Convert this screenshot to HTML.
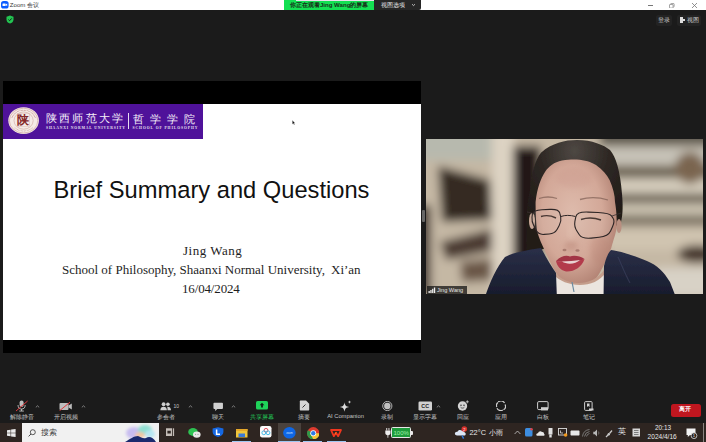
<!DOCTYPE html>
<html><head><meta charset="utf-8">
<style>
*{margin:0;padding:0;box-sizing:border-box}
html,body{width:706px;height:442px;overflow:hidden;background:#1b1b1b;font-family:"Liberation Sans",sans-serif}
.a{position:absolute}
#title{left:0;top:0;width:706px;height:10px;background:#fff}
#slide{left:3px;top:81px;width:418px;height:272px;background:#000}
#sw{left:3px;top:104px;width:418px;height:236px;background:#fff}
#banner{left:3px;top:104px;width:200px;height:35px;background:#4f129a}
#video{left:426px;top:139px;width:277px;height:155px;background:#b9a98f;overflow:hidden}
#taskbar{left:0;top:423px;width:706px;height:19px;background:#2e2521}
#search{left:22px;top:423px;width:137px;height:19px;background:#f1f1f1}
.t{white-space:nowrap;line-height:1}
.tb{color:#c6c6c6;font-size:6.4px;white-space:nowrap;line-height:1}
</style></head><body>
<!-- title bar -->
<div class="a" id="title"></div>
<svg class="a" style="left:0.8px;top:1.2px" width="8" height="8" viewBox="0 0 8 8"><rect x="0" y="0" width="7.6" height="7.6" rx="2.6" fill="#0b5cff"/><rect x="1.5" y="2.6" width="3.2" height="2.4" rx="0.5" fill="#fff"/><path d="M4.9 3.3 L6.2 2.6 V5 L4.9 4.3 Z" fill="#fff"/></svg>
<div class="a t" style="left:9.8px;top:2.3px;font-size:6.1px;color:#3a3a3a">Zoom 会议</div>
<div class="a" style="left:284px;top:0;width:90px;height:10px;background:#14df52"></div><div class="a" style="left:296px;top:0;width:125px;height:1px;background:#e8e0ea"></div>
<div class="a t" style="left:290px;top:1.9px;font-size:6.05px;color:#173019;font-weight:bold">你正在观看Jing Wang的屏幕</div>
<div class="a" style="left:374px;top:0;width:47px;height:10px;background:#262626;border-radius:0 0 2px 0"></div>
<div class="a t" style="left:381px;top:2px;font-size:6px;color:#e8e8e8">视图选项</div>
<svg class="a" style="left:411px;top:3px" width="5" height="4" viewBox="0 0 5 4"><path d="M1 1.2 L2.5 2.6 L4 1.2" stroke="#ddd" stroke-width="0.8" fill="none"/></svg>
<div class="a" style="left:648px;top:5px;width:5px;height:1px;background:#777"></div>
<svg class="a" style="left:669.2px;top:2.8px" width="5.6" height="5.6" viewBox="0 0 7 7"><rect x="0.6" y="1.9" width="4.5" height="4.5" rx="0.6" stroke="#666" stroke-width="0.75" fill="none"/><path d="M1.9 1.2 Q2.1 0.6 2.8 0.6 H5.6 Q6.4 0.6 6.4 1.4 V4.2 Q6.4 4.9 5.8 5.1" stroke="#666" stroke-width="0.75" fill="none"/></svg>
<svg class="a" style="left:691px;top:2px" width="7" height="7" viewBox="0 0 7 7"><path d="M1 1 L6 6 M6 1 L1 6" stroke="#777" stroke-width="0.8"/></svg>
<!-- shield -->
<svg class="a" style="left:6px;top:15px" width="8" height="9" viewBox="0 0 8 9"><path d="M4 0.5 L7.5 1.8 V4.5 C7.5 6.8 5.8 8 4 8.6 C2.2 8 0.5 6.8 0.5 4.5 V1.8 Z" fill="#23c552"/><path d="M2.4 4.6 L3.6 5.7 L5.7 3.4" stroke="#111" stroke-width="0.9" fill="none"/></svg>
<!-- top right buttons -->
<div class="a" style="left:656px;top:15px;width:16px;height:11px;background:#232323;border-radius:2px"></div>
<div class="a t" style="left:658px;top:17px;font-size:6px;color:#cfcfcf">登录</div>
<div class="a" style="left:677px;top:15px;width:24px;height:11px;background:#232323;border-radius:2px"></div>
<div class="a" style="left:680px;top:17px;width:3px;height:6px;background:#ddd"></div>
<div class="a" style="left:683px;top:19px;width:2px;height:2px;background:#ddd"></div>
<div class="a t" style="left:687px;top:17px;font-size:6px;color:#cfcfcf">视图</div>

<!-- slide -->
<div class="a" id="slide"></div>
<div class="a" id="sw"></div>
<div class="a" id="banner"></div>
<svg class="a" style="left:8px;top:107px" width="32" height="28" viewBox="0 0 32 28"><ellipse cx="15.6" cy="13.6" rx="15.3" ry="13.4" fill="#f4eae6"/><ellipse cx="15.6" cy="13.6" rx="14.2" ry="12.4" fill="none" stroke="#c48d86" stroke-width="0.5"/><ellipse cx="15.6" cy="13.6" rx="9.6" ry="8.6" fill="none" stroke="#c99a93" stroke-width="0.5"/><circle cx="4.00" cy="10.39" r="0.45" fill="#b06a66"/><circle cx="4.53" cy="9.23" r="0.45" fill="#b06a66"/><circle cx="5.22" cy="8.13" r="0.45" fill="#b06a66"/><circle cx="6.06" cy="7.12" r="0.45" fill="#b06a66"/><circle cx="7.04" cy="6.19" r="0.45" fill="#b06a66"/><circle cx="8.14" cy="5.37" r="0.45" fill="#b06a66"/><circle cx="9.34" cy="4.67" r="0.45" fill="#b06a66"/><circle cx="10.64" cy="4.10" r="0.45" fill="#b06a66"/><circle cx="12.00" cy="3.66" r="0.45" fill="#b06a66"/><circle cx="13.42" cy="3.37" r="0.45" fill="#b06a66"/><circle cx="14.87" cy="3.22" r="0.45" fill="#b06a66"/><circle cx="16.33" cy="3.22" r="0.45" fill="#b06a66"/><circle cx="17.78" cy="3.37" r="0.45" fill="#b06a66"/><circle cx="19.20" cy="3.66" r="0.45" fill="#b06a66"/><circle cx="20.56" cy="4.10" r="0.45" fill="#b06a66"/><circle cx="21.86" cy="4.67" r="0.45" fill="#b06a66"/><circle cx="23.06" cy="5.37" r="0.45" fill="#b06a66"/><circle cx="24.16" cy="6.19" r="0.45" fill="#b06a66"/><circle cx="25.14" cy="7.12" r="0.45" fill="#b06a66"/><circle cx="25.98" cy="8.13" r="0.45" fill="#b06a66"/><circle cx="26.67" cy="9.23" r="0.45" fill="#b06a66"/><circle cx="27.20" cy="10.39" r="0.45" fill="#b06a66"/><circle cx="24.23" cy="20.95" r="0.4" fill="#b88078"/><circle cx="23.12" cy="21.79" r="0.4" fill="#b88078"/><circle cx="21.91" cy="22.50" r="0.4" fill="#b88078"/><circle cx="20.61" cy="23.08" r="0.4" fill="#b88078"/><circle cx="19.23" cy="23.53" r="0.4" fill="#b88078"/><circle cx="17.80" cy="23.83" r="0.4" fill="#b88078"/><circle cx="16.34" cy="23.98" r="0.4" fill="#b88078"/><circle cx="14.86" cy="23.98" r="0.4" fill="#b88078"/><circle cx="13.40" cy="23.83" r="0.4" fill="#b88078"/><circle cx="11.97" cy="23.53" r="0.4" fill="#b88078"/><circle cx="10.59" cy="23.08" r="0.4" fill="#b88078"/><circle cx="9.29" cy="22.50" r="0.4" fill="#b88078"/><circle cx="8.08" cy="21.79" r="0.4" fill="#b88078"/><circle cx="6.97" cy="20.95" r="0.4" fill="#b88078"/><rect x="9.6" y="6.6" width="12" height="13" fill="none" stroke="#d9b0aa" stroke-width="0.4"/></svg>
<div class="a t" style="left:17.2px;top:114px;font-family:'Liberation Serif';font-size:12.4px;color:#86282a;font-weight:bold">陕</div>
<div class="a t" style="left:45.5px;top:113.4px;font-family:'Liberation Serif';font-size:11.4px;color:#f4eef8;letter-spacing:2.4px">陕西师范大学</div>
<div class="a t" style="left:46px;top:126.9px;font-family:'Liberation Serif';font-size:3.7px;color:#e8e0ef;letter-spacing:0.85px;font-weight:bold">SHAANXI NORMAL UNIVERSITY</div>
<div class="a" style="left:128px;top:112.5px;width:1px;height:16px;background:#e6dcef"></div>
<div class="a t" style="left:132.5px;top:113.8px;font-family:'Liberation Serif';font-size:11px;color:#f4eef8;letter-spacing:6px">哲学学院</div>
<div class="a t" style="left:132.5px;top:126.9px;font-family:'Liberation Serif';font-size:3.7px;color:#e8e0ef;letter-spacing:0.95px;font-weight:bold">SCHOOL OF PHILOSOPHY</div>
<div class="a t" style="left:53.5px;top:178.5px;font-size:23.7px;color:#111">Brief Summary and Questions</div>
<div class="a t" style="left:183px;top:244.2px;font-family:'Liberation Serif';font-size:13px;color:#1e1e1e;letter-spacing:0.5px">Jing Wang</div>
<div class="a t" style="left:62px;top:263.2px;font-family:'Liberation Serif';font-size:13px;color:#1e1e1e">School of Philosophy, Shaanxi Normal University,</div>
<div class="a t" style="left:331px;top:263.2px;font-family:'Liberation Serif';font-size:13px;color:#1e1e1e">Xi’an</div>
<div class="a t" style="left:182px;top:282.2px;font-family:'Liberation Serif';font-size:13px;color:#1e1e1e;letter-spacing:-0.15px">16/04/2024</div>
<!-- cursor -->
<svg class="a" style="left:292px;top:120.3px" width="4" height="5.4" viewBox="0 0 6 8"><path d="M0.5 0.5 L0.5 6.5 L2 5.2 L3.2 7.5 L4 7.1 L2.9 4.9 L4.8 4.9 Z" fill="#111" stroke="#fff" stroke-width="0.4"/></svg>

<!-- splitter -->
<div class="a" style="left:422px;top:210px;width:3px;height:12px;background:#666;border-radius:1px"></div>

<div class="a" id="video"><svg width="277" height="155" viewBox="426 139 277 155">
<defs>
<filter id="bl" x="-20%" y="-20%" width="140%" height="140%"><feGaussianBlur stdDeviation="5"/></filter>
<filter id="bl1" x="-20%" y="-20%" width="140%" height="140%"><feGaussianBlur stdDeviation="0.7"/></filter>
<filter id="bl3" x="-50%" y="-50%" width="200%" height="200%"><feGaussianBlur stdDeviation="2.5"/></filter>
<radialGradient id="skin" cx="0.45" cy="0.42" r="0.62"><stop offset="0" stop-color="#debbac"/><stop offset="0.6" stop-color="#d3a898"/><stop offset="1" stop-color="#ad7d6e"/></radialGradient>
<radialGradient id="hairg" cx="0.5" cy="0.1" r="0.7"><stop offset="0" stop-color="#4e4843"/><stop offset="0.5" stop-color="#2e2824"/><stop offset="1" stop-color="#221c19"/></radialGradient>
<linearGradient id="suitg" x1="0" y1="0" x2="0" y2="1"><stop offset="0" stop-color="#2a2f48"/><stop offset="1" stop-color="#161a2a"/></linearGradient>
</defs>
<g filter="url(#bl)">
<rect x="400" y="120" width="330" height="200" fill="#c5b8a4"/>
<rect x="420" y="120" width="85" height="40" fill="#b7b9ae"/>
<rect x="418" y="205" width="13" height="90" fill="#3f332b"/>
<path d="M438 166 L490 180 L492 220 L442 222 Z" fill="#362b24"/>
<path d="M440 242 L496 228 L498 250 L446 260 Z" fill="#4b3b30"/>
<path d="M460 262 L497 258 L498 280 L462 282 Z" fill="#6a5646"/>
<rect x="492" y="125" width="22" height="180" fill="#ddd3c3"/>
<rect x="513" y="146" width="28" height="120" fill="#211914"/>
<rect x="600" y="120" width="130" height="26" fill="#5e5a50"/>
<rect x="600" y="148" width="130" height="16" fill="#c6c2b8"/>
<rect x="600" y="166" width="130" height="12" fill="#675e50"/>
<rect x="600" y="179" width="130" height="14" fill="#d4ccbc"/>
<rect x="600" y="194" width="130" height="9" fill="#5e564a"/>
<rect x="600" y="204" width="130" height="11" fill="#cbc3b1"/>
<rect x="600" y="215" width="130" height="11" fill="#7c7262"/>
<rect x="600" y="228" width="130" height="22" fill="#d0c4b0"/>
<ellipse cx="697" cy="254" rx="20" ry="9" fill="#45362c"/>
<rect x="655" y="268" width="60" height="30" fill="#d8d2c6"/>
<ellipse cx="690" cy="168" rx="15" ry="16" fill="#7a6550"/>
</g>
<g filter="url(#bl1)">
<!-- hair -->
<path d="M527 252 C525 225 527 205 530 190 C531 175 535 160 541 152.7 C552 143 565 140 577 140 C592 140 604 145 610 150 C616 157 620 170 622 194 C623 205 623 214 621 222 L616 226 L540 250 Z" fill="url(#hairg)"/>
<!-- ears -->
<ellipse cx="532" cy="221" rx="3" ry="8" fill="#c9a897"/>
<ellipse cx="619" cy="226" rx="2.6" ry="7" fill="#b98f80"/>
<!-- face -->
<path d="M535.6 202 C537 188 541 178 545 172 C549 166 554 162.3 562 160.5 C568 159.5 572 159.3 576.7 159.5 C585 160 591 162 596 165 C603 170 607 175 609.6 180 C613 188 615 195 615 202 C616 208 616.4 212 616.6 218 C617 226 616.5 232 613.5 240 C612 245 611 250 607 258 C603 267 599 276 592 283 C586 287 580 288 574 288 C566 287 560 280 555 271 C551 264 548 258 545 251 C542 245 539 238 537 231 C536 222 535.5 212 535.6 202 Z" fill="url(#skin)"/>
<ellipse cx="574" cy="178" rx="18" ry="10" fill="#c9968a" opacity="0.3" filter="url(#bl3)"/>
<ellipse cx="600" cy="250" rx="10" ry="14" fill="#b88474" opacity="0.35" filter="url(#bl3)"/>
<!-- eyebrows -->
<path d="M539 198.5 C545 196.5 551 196.5 557 198.5" stroke="#6e5046" stroke-width="1.3" fill="none" opacity="0.6"/>
<path d="M580 199.5 C589 197 598 197 608 200" stroke="#6e5046" stroke-width="1.3" fill="none" opacity="0.6"/>
<!-- nose -->
<ellipse cx="571" cy="246" rx="7" ry="5" fill="#c08f80" opacity="0.55" filter="url(#bl3)"/>
<ellipse cx="564.5" cy="250" rx="2" ry="1.3" fill="#8e5e55" opacity="0.6"/>
<ellipse cx="577.5" cy="250.5" rx="2" ry="1.3" fill="#8e5e55" opacity="0.6"/>
<ellipse cx="571" cy="232" rx="2.5" ry="8" fill="#e3c4b4" opacity="0.5" filter="url(#bl3)"/>
<!-- lips -->
<path d="M556 261 C561 256 566 255 570 256.5 C574 255 580 256 584.5 259 C580 262 570 263 556 261 Z" fill="#a23445"/>
<path d="M556 261 C566 262 577 262 584.5 259 C582 267 574 272 566 271.5 C560 270 557 266 556 261 Z" fill="#b33a4c"/>
<path d="M562 261.5 C568 261 575 261 580 260 C576 264 567 265 562 261.5 Z" fill="#e9d3d2"/>
<!-- neck -->
<path d="M552 268 C560 285 590 290 604 270 L606 292 L552 292 Z" fill="#c49d8b"/>
<!-- shirt -->
<path d="M553 274 C565 288 595 290 606 272 L610 300 L550 300 Z" fill="#ebe5df"/>
<path d="M572 282 L574 292" stroke="#6a8aa0" stroke-width="1.2"/>
<!-- suit -->
<path d="M484 300 C489 284 496 268 505 257 C514 252 528 250 541 248 C546 257 551 266 556 273 L557 300 Z" fill="url(#suitg)"/>
<path d="M603.5 300 L604 266 C606 258 608 253 611 250 C620 251 635 256 647 261 C657 265 664 272 670 282 L677 300 Z" fill="url(#suitg)"/><path d="M618 257 C622 266 626 276 630 283" stroke="#3a3f5c" stroke-width="1.2" fill="none" opacity="0.7"/>


<!-- glasses -->
<path d="M532.4 214.0 Q532.9 210.2 542.0 209.7 L549.8 209.4 Q558.9 208.9 559.8 213.2 L560.7 216.9 Q561.6 221.2 559.2 225.5 L557.2 229.2 Q554.8 233.5 549.1 234.0 L544.1 234.4 Q538.4 234.9 536.0 230.1 L533.9 226.0 Q531.5 221.2 532.0 217.3 Z" fill="#e2d2cc" fill-opacity="0.12" stroke="#2e2626" stroke-width="1.1"/>
<path d="M575.8 216.9 Q576.7 211.6 588.2 212.1 L598.1 212.5 Q609.6 213.0 611.5 215.9 L613.1 218.3 Q615.0 221.2 612.6 226.5 L610.6 231.0 Q608.2 236.3 599.1 237.2 L591.3 238.1 Q582.2 239.0 579.3 234.7 L576.9 231.0 Q574.0 226.7 574.9 221.4 Z" fill="#e2d2cc" fill-opacity="0.12" stroke="#2e2626" stroke-width="1.1"/>
<path d="M561 216.5 C565 215 570 215 575.5 216.5" stroke="#2e2626" stroke-width="1" fill="none"/>
<path d="M532 213 L527 212" stroke="#3a3031" stroke-width="0.8" fill="none"/>
<path d="M612 216 L621 213" stroke="#3a3031" stroke-width="0.8" fill="none"/>
<!-- eyes -->
<path d="M541 216.5 C546 215 551 215.5 556 218" stroke="#2e2220" stroke-width="1.4" fill="none" opacity="0.85"/>
<path d="M581 219.5 C587 217.5 594 217.5 601 220" stroke="#2e2220" stroke-width="1.4" fill="none" opacity="0.85"/>
</g>
</svg>
<div class="a" style="left:1px;top:147px;width:40px;height:8px;background:rgba(20,20,20,0.75)"></div>
<svg class="a" style="left:2px;top:148px" width="8" height="6" viewBox="0 0 8 6"><rect x="0.5" y="4" width="1.3" height="2" fill="#eee"/><rect x="2.3" y="3" width="1.3" height="3" fill="#eee"/><rect x="4.1" y="1.8" width="1.3" height="4.2" fill="#eee"/><rect x="5.9" y="0.5" width="1.3" height="5.5" fill="#eee"/></svg>
<div class="a t" style="left:11px;top:148.5px;font-size:5.6px;color:#e4e4e4">Jing Wang</div>
</div>

<!-- zoom toolbar -->
<svg class="a" style="left:15px;top:400px" width="14" height="12" viewBox="0 0 14 12"><rect x="4.6" y="0.6" width="4" height="6.4" rx="2" fill="#bdbdbd"/><path d="M3 5 C3 8 4.6 9 6.6 9 C8.6 9 10.2 8 10.2 5" stroke="#bdbdbd" stroke-width="0.9" fill="none"/><rect x="6.1" y="9" width="1" height="2" fill="#bdbdbd"/><rect x="4.3" y="10.6" width="4.6" height="0.9" fill="#bdbdbd"/><path d="M1 11 L12.6 1" stroke="#e0393e" stroke-width="1"/></svg>
<svg class="a" style="left:35px;top:405.2px" width="5" height="3" viewBox="0 0 5 3"><path d="M0.8 2.4 L2.5 0.8 L4.2 2.4" stroke="#aaa" stroke-width="0.7" fill="none"/></svg>
<div class="a tb" style="left:-8.50px;width:60px;text-align:center;top:413.5px">解除静音</div>
<svg class="a" style="left:59px;top:402px" width="14" height="9" viewBox="0 0 14 9"><rect x="0.5" y="1" width="9" height="7" rx="1" fill="#bdbdbd"/><path d="M9.5 3.5 L12.8 1.5 V7.5 L9.5 5.5 Z" fill="#bdbdbd"/><path d="M0.5 8.8 L11 0.2" stroke="#e0393e" stroke-width="1"/></svg>
<svg class="a" style="left:81px;top:405.2px" width="5" height="3" viewBox="0 0 5 3"><path d="M0.8 2.4 L2.5 0.8 L4.2 2.4" stroke="#aaa" stroke-width="0.7" fill="none"/></svg>
<div class="a tb" style="left:36.25px;width:60px;text-align:center;top:413.5px">开启视频</div>

<svg class="a" style="left:160px;top:402px" width="11.5" height="8.6" viewBox="0 0 13 10"><circle cx="4" cy="2.6" r="2.2" fill="#cfcfcf"/><path d="M0.2 9.5 C0.2 6.5 1.8 5.4 4 5.4 C6.2 5.4 7.8 6.5 7.8 9.5 Z" fill="#cfcfcf"/><circle cx="9" cy="2.6" r="2.1" fill="#cfcfcf"/><path d="M8 5.5 C10.5 5.2 12.6 6.2 12.6 9.5 H8.6 C8.6 7.5 8.4 6.3 8 5.5 Z" fill="#cfcfcf"/></svg>
<div class="a tb" style="left:173.5px;top:403.5px;font-size:5px">10</div>
<svg class="a" style="left:188px;top:405.2px" width="5" height="3" viewBox="0 0 5 3"><path d="M0.8 2.4 L2.5 0.8 L4.2 2.4" stroke="#aaa" stroke-width="0.7" fill="none"/></svg>
<div class="a tb" style="left:136.30px;width:60px;text-align:center;top:413.5px">参会者</div>

<svg class="a" style="left:212.8px;top:401.6px" width="10.4" height="9.5" viewBox="0 0 12 11"><path d="M1.5 0.8 H10.5 C11.1 0.8 11.5 1.2 11.5 1.8 V7 C11.5 7.6 11.1 8 10.5 8 H5 L2.5 10.4 V8 H1.5 C0.9 8 0.5 7.6 0.5 7 V1.8 C0.5 1.2 0.9 0.8 1.5 0.8 Z" fill="#cfcfcf"/></svg>
<svg class="a" style="left:231px;top:405.2px" width="5" height="3" viewBox="0 0 5 3"><path d="M0.8 2.4 L2.5 0.8 L4.2 2.4" stroke="#aaa" stroke-width="0.7" fill="none"/></svg>
<div class="a tb" style="left:187.70px;width:60px;text-align:center;top:413.5px">聊天</div>

<svg class="a" style="left:256px;top:401px" width="12" height="9" viewBox="0 0 12 9"><rect x="0" y="0" width="12" height="8.5" rx="1.6" fill="#1fd35a"/><path d="M6 1.8 L8.3 4.3 H6.9 V6.6 H5.1 V4.3 H3.7 Z" fill="#0f1f14"/></svg>
<div class="a tb" style="left:231.65px;width:60px;text-align:center;top:413.5px;color:#23d35c">共享屏幕</div>

<svg class="a" style="left:299px;top:400px" width="11" height="11" viewBox="0 0 11 11"><path d="M1.8 0.5 H7 L10.2 3.7 V9.5 C10.2 10.1 9.8 10.5 9.2 10.5 H1.8 C1.2 10.5 0.8 10.1 0.8 9.5 V1.5 C0.8 0.9 1.2 0.5 1.8 0.5 Z" fill="#d4d4d4"/><path d="M3.5 7.5 L6.5 4.5" stroke="#333" stroke-width="1"/></svg>
<div class="a tb" style="left:274.15px;width:60px;text-align:center;top:413.5px">摘要</div>

<svg class="a" style="left:339px;top:400px" width="13" height="12" viewBox="0 0 13 12"><path d="M5.5 2.2 C6 5.5 7 6.5 10.2 7 C7 7.5 6 8.5 5.5 11.8 C5 8.5 4 7.5 0.8 7 C4 6.5 5 5.5 5.5 2.2 Z" fill="#dedede"/><path d="M10.5 0.3 C10.7 1.6 11 1.9 12.3 2.1 C11 2.3 10.7 2.6 10.5 3.9 C10.3 2.6 10 2.3 8.7 2.1 C10 1.9 10.3 1.6 10.5 0.3 Z" fill="#dedede"/></svg>
<div class="a tb" style="left:315.50px;width:60px;text-align:center;top:413.5px;font-size:5.8px">AI Companion</div>

<svg class="a" style="left:382px;top:401px" width="11" height="10" viewBox="0 0 11 10"><circle cx="5.3" cy="5" r="4.6" fill="none" stroke="#bfbfbf" stroke-width="0.9"/><circle cx="5.3" cy="5" r="3.2" fill="#bfbfbf"/></svg>
<div class="a tb" style="left:357.45px;width:60px;text-align:center;top:413.5px">录制</div>

<svg class="a" style="left:418px;top:401px" width="15" height="10" viewBox="0 0 15 10"><rect x="0.5" y="0.5" width="13.5" height="9" rx="1.2" fill="#d0d0d0"/><text x="7.25" y="7" font-family="Liberation Sans" font-size="5.4" font-weight="bold" text-anchor="middle" fill="#222">CC</text></svg>
<svg class="a" style="left:436px;top:405.2px" width="5" height="3" viewBox="0 0 5 3"><path d="M0.8 2.4 L2.5 0.8 L4.2 2.4" stroke="#aaa" stroke-width="0.7" fill="none"/></svg>
<div class="a tb" style="left:394.85px;width:60px;text-align:center;top:413.5px">显示字幕</div>

<svg class="a" style="left:457px;top:400px" width="12" height="11" viewBox="0 0 12 11"><circle cx="5.5" cy="6" r="4.7" fill="#d4d4d4"/><circle cx="4" cy="5.2" r="0.7" fill="#222"/><circle cx="7" cy="5.2" r="0.7" fill="#222"/><path d="M3.6 7.2 C4.5 8.4 6.5 8.4 7.4 7.2" stroke="#222" stroke-width="0.7" fill="none"/><path d="M10.3 0.3 V3.3 M8.8 1.8 H11.8" stroke="#d4d4d4" stroke-width="0.8"/></svg>
<div class="a tb" style="left:432.75px;width:60px;text-align:center;top:413.5px">回应</div>

<svg class="a" style="left:496px;top:401px" width="10" height="10" viewBox="0 0 10 10"><path d="M2.2 1 A4 4 0 0 1 8.5 2" stroke="#cfcfcf" stroke-width="1.2" fill="none"/><path d="M9 3.5 A4 4 0 0 1 7.5 8.8" stroke="#cfcfcf" stroke-width="1.2" fill="none"/><path d="M6.8 9 A4 4 0 0 1 1 7.2" stroke="#cfcfcf" stroke-width="1.2" fill="none"/><path d="M0.8 6 A4 4 0 0 1 1.8 1.5" stroke="#cfcfcf" stroke-width="1.2" fill="none"/></svg>
<div class="a tb" style="left:471.25px;width:60px;text-align:center;top:413.5px">应用</div>

<svg class="a" style="left:537px;top:401px" width="12" height="10" viewBox="0 0 12 10"><rect x="0.6" y="0.6" width="10.5" height="8" rx="1.2" fill="none" stroke="#cfcfcf" stroke-width="1"/><rect x="4" y="6.2" width="7" height="3.2" fill="#cfcfcf"/></svg>
<div class="a tb" style="left:512.90px;width:60px;text-align:center;top:413.5px">白板</div>

<svg class="a" style="left:584px;top:401px" width="10" height="10" viewBox="0 0 10 10"><rect x="0.6" y="0.6" width="7.5" height="8.8" rx="1" fill="none" stroke="#cfcfcf" stroke-width="1"/><path d="M3 2.5 H5.5 V6 L4.25 5 L3 6 Z" fill="#cfcfcf"/><rect x="5" y="7.5" width="4.5" height="2" fill="#cfcfcf"/></svg>
<div class="a tb" style="left:558.75px;width:60px;text-align:center;top:413.5px">笔记</div>

<div class="a" style="left:671px;top:404px;width:29.5px;height:13px;background:#c0161f;border-radius:2.5px"></div>
<div class="a t" style="left:655.3px;width:60px;text-align:center;top:406.4px;font-size:6.4px;color:#fff;font-weight:bold">离开</div>

<!-- taskbar -->
<div class="a" id="taskbar"></div>
<svg class="a" style="left:7px;top:428.5px" width="9" height="8" viewBox="0 0 9 8"><path d="M0 1.2 L3.6 0.7 V3.7 H0 Z M4.1 0.6 L8.6 0 V3.7 H4.1 Z M0 4.2 H3.6 V7.3 L0 6.8 Z M4.1 4.2 H8.6 V8 L4.1 7.4 Z" fill="#eaeaea"/></svg>
<div class="a" id="search"></div>
<svg class="a" style="left:28px;top:429px" width="8" height="8" viewBox="0 0 8 8"><circle cx="4.8" cy="3.2" r="2.5" fill="none" stroke="#333" stroke-width="0.8"/><path d="M3 5 L0.6 7.4" stroke="#333" stroke-width="0.9"/></svg>
<div class="a t" style="left:41.3px;top:428.6px;font-size:7.8px;color:#3a3a3a">搜索</div>
<svg class="a" style="left:122px;top:423px" width="37" height="19" viewBox="0 0 37 19">
<defs><filter id="sb"><feGaussianBlur stdDeviation="1.6"/></filter></defs>
<g filter="url(#sb)"><ellipse cx="12" cy="10" rx="8" ry="6" fill="#c8bdf0"/><ellipse cx="23" cy="7" rx="7" ry="5" fill="#8fe0d2"/><ellipse cx="18" cy="12" rx="5" ry="3" fill="#f3c6a0"/><ellipse cx="28" cy="11" rx="5" ry="4" fill="#b8e6f2"/></g>
<path d="M3 19 C8 16 12 13 16 13 C19 14 21 16 24 15 C27 13 31 14 34 19 Z" fill="#1b2a6e"/>
</svg>
<svg class="a" style="left:166px;top:428px" width="9" height="9" viewBox="0 0 9 9"><path d="M0 0.3 H6.2 V8 H0 Z M1.4 2.8 V5.6 H4.8 V2.8 Z" fill="#c4bcb6" fill-rule="evenodd"/><rect x="7" y="0.3" width="1.1" height="7.7" fill="#c4bcb6"/></svg>
<!-- wechat -->
<svg class="a" style="left:188px;top:427.5px" width="13" height="10" viewBox="0 0 13 10"><ellipse cx="5" cy="4" rx="4.8" ry="3.9" fill="#2dc152"/><ellipse cx="8.8" cy="6.6" rx="3.8" ry="3.2" fill="#e8e8e8"/><circle cx="7.6" cy="6.3" r="0.5" fill="#777"/><circle cx="10" cy="6.3" r="0.5" fill="#777"/></svg>
<!-- blue shield -->
<svg class="a" style="left:212px;top:427px" width="12" height="10" viewBox="0 0 12 10"><path d="M6 0.2 L11.4 1.5 V5 C11.4 7.6 9 9.2 6 9.9 C3 9.2 0.6 7.6 0.6 5 V1.5 Z" fill="#1668e3"/><path d="M4.6 2.4 V7.2 H8" stroke="#fff" stroke-width="1.5" fill="none"/></svg>
<!-- folder -->
<svg class="a" style="left:236px;top:428.5px" width="12" height="9" viewBox="0 0 12 9"><rect x="0" y="0" width="11.5" height="8.5" fill="#f0c43a"/><rect x="0" y="0" width="11.5" height="2" fill="#e7a92a"/><rect x="2.5" y="4.5" width="6.5" height="3.5" fill="#3c7ad6"/></svg>
<div class="a" style="left:232px;top:440.5px;width:19px;height:1.5px;background:#9ec7f2"></div>
<!-- white app -->
<svg class="a" style="left:259.5px;top:426px" width="12" height="12" viewBox="0 0 12 12"><rect x="0" y="0" width="11.5" height="11.5" rx="2.2" fill="#fafafa"/><circle cx="6" cy="4.3" r="1.9" fill="none" stroke="#e04050" stroke-width="0.9"/><circle cx="3.8" cy="6.8" r="1.9" fill="none" stroke="#35b8e8" stroke-width="0.9"/><circle cx="8" cy="6.8" r="1.9" fill="none" stroke="#35b8e8" stroke-width="0.9"/></svg>
<!-- active zoom -->
<div class="a" style="left:277.5px;top:423px;width:23px;height:19px;background:#4a423d"></div>
<svg class="a" style="left:282.5px;top:427px" width="13" height="12" viewBox="0 0 13 12"><ellipse cx="6.4" cy="5.8" rx="6.3" ry="5.8" fill="#0e67e6"/><text x="6.4" y="6.8" font-family="Liberation Sans" font-size="2.6" text-anchor="middle" fill="#dbe8ff">zoom</text></svg>
<div class="a" style="left:278px;top:440.5px;width:22px;height:1.5px;background:#9ec7f2"></div>
<!-- chrome -->
<svg class="a" style="left:306.5px;top:426.5px" width="12.5" height="12.5" viewBox="0 0 12 12"><circle cx="6" cy="6" r="5.9" fill="#dd3b2f"/><path d="M6 6 L0.9 9 A5.9 5.9 0 0 1 0.9 3 Z" fill="#2b9b4a"/><path d="M6 6 L0.9 9 A5.9 5.9 0 0 0 11.1 9 Z" fill="#2b9b4a"/><path d="M6 6 L11.9 6 A5.9 5.9 0 0 1 6 11.9 L3 6 Z" fill="#f7c437"/><circle cx="6" cy="6" r="2.8" fill="#fff"/><circle cx="6" cy="6" r="2.1" fill="#2f7be6"/></svg>
<div class="a" style="left:303px;top:440.5px;width:19px;height:1.5px;background:#9ec7f2"></div>
<!-- wps -->
<svg class="a" style="left:330.2px;top:428.6px" width="12" height="8.2" viewBox="0 0 12 8.2"><path d="M1 1 L3.8 7.2 L6 3.6 L8.2 7.2 L11 1 Z" stroke="#f2361e" stroke-width="1.8" stroke-linejoin="round" fill="none"/><path d="M5.2 5 L6.2 3.2" stroke="#ff7a1a" stroke-width="1"/></svg>
<div class="a" style="left:327px;top:440.5px;width:19px;height:1.5px;background:#9ec7f2"></div>
<!-- battery -->
<svg class="a" style="left:384.5px;top:427.5px" width="6" height="10" viewBox="0 0 6 10"><rect x="1.3" y="0" width="0.9" height="2.5" fill="#eee"/><rect x="3.5" y="0" width="0.9" height="2.5" fill="#eee"/><path d="M0.3 2.5 H5.5 V5 C5.5 6.5 4.5 7 3.3 7.2 V9.8 H2.5 V7.2 C1.3 7 0.3 6.5 0.3 5 Z" fill="#eee"/></svg>
<div class="a" style="left:391.2px;top:427px;width:20.2px;height:11px;border:1px solid #e8e8e8;border-radius:1.5px;background:#1e9b3c"></div>
<div class="a" style="left:411.4px;top:430.5px;width:1.6px;height:4px;background:#e8e8e8;border-radius:0 1px 1px 0"></div>
<div class="a t" style="left:393.5px;top:429.6px;font-size:6px;color:#9ef0a8">100%</div>
<!-- weather -->
<svg class="a" style="left:454px;top:426px" width="14" height="13" viewBox="0 0 14 13"><path d="M3 9.5 C1 9.5 0.4 7.8 1.2 6.6 C1.8 5.7 3 5.6 3.5 5.8 C4 3.8 6.5 3.3 7.8 4.6 C8.8 4 10.6 4.6 10.6 6.4 C12 6.5 12.3 9.3 10.4 9.5 Z" fill="#dbe6f5"/><path d="M8 9.5 L9.6 12.6" stroke="#2d7be0" stroke-width="1.4"/><circle cx="10.3" cy="3" r="2.8" fill="#d9312b"/><text x="10.3" y="4.6" font-family="Liberation Sans" font-size="4" text-anchor="middle" fill="#fff">2</text></svg>
<div class="a t" style="left:469.5px;top:428.5px;font-size:7.4px;color:#e8e8e8">22°C</div>
<div class="a t" style="left:488.5px;top:428.5px;font-size:7px;color:#e8e8e8">小雨</div>
<svg class="a" style="left:513.5px;top:429.5px" width="7" height="4.5" viewBox="0 0 7 4.5"><path d="M0.6 4 L3.5 1 L6.4 4" stroke="#ccc" stroke-width="0.8" fill="none"/></svg>
<!-- tray -->
<svg class="a" style="left:524.5px;top:428px" width="8" height="9" viewBox="0 0 8 9"><rect x="0" y="0" width="7.5" height="8.5" rx="1.5" fill="#3d8de0"/><circle cx="6.5" cy="1.2" r="1.2" fill="#e04040"/></svg>
<svg class="a" style="left:535.5px;top:429.5px" width="9" height="6" viewBox="0 0 9 6"><path d="M1.8 5.8 C0.5 5.8 0 4.8 0.4 4 C0.8 3.2 1.6 3.2 2 3.3 C2.4 1.4 4.7 0.6 6 2 C7.4 1.8 8.2 2.8 8 3.8 C8.8 4.1 8.9 5.7 7.8 5.8 Z" fill="#e8e8e8"/></svg>
<svg class="a" style="left:547.5px;top:428px" width="5" height="10" viewBox="0 0 5 10"><rect x="0.5" y="0" width="4" height="6.5" fill="#e0e0e0"/><rect x="1.3" y="6.5" width="2.4" height="3" fill="#e0e0e0"/></svg>
<svg class="a" style="left:557.5px;top:428px" width="10" height="9" viewBox="0 0 10 9"><rect x="0.5" y="0.5" width="8" height="6.5" fill="none" stroke="#ddd" stroke-width="0.9"/><path d="M2.5 2.5 V5 H5" stroke="#ddd" stroke-width="0.8" fill="none"/><circle cx="7.6" cy="7" r="1.8" fill="#f39a1e"/></svg>
<svg class="a" style="left:569.5px;top:429.5px" width="10" height="6" viewBox="0 0 10 6"><path d="M1 0.5 H8.5 C9.2 0.5 9.5 0.9 9.5 1.5 V4.5 C9.5 5.1 9.2 5.5 8.5 5.5 H1.5 C0.9 5.5 0.5 5.1 0.5 4.5 V1.5 Z" fill="#e8e8e8"/></svg>
<svg class="a" style="left:582px;top:428px" width="8" height="9" viewBox="0 0 8 9"><path d="M0.5 8.5 A8 8 0 0 1 7.5 1.5" stroke="#8a8a8a" stroke-width="0.8" fill="none"/><path d="M2.5 8.5 A6 6 0 0 1 7.5 3.5" stroke="#8a8a8a" stroke-width="0.8" fill="none"/><path d="M4.5 8.5 A4 4 0 0 1 7.5 5.5" stroke="#8a8a8a" stroke-width="0.8" fill="none"/></svg>
<svg class="a" style="left:592.5px;top:429px" width="7" height="8" viewBox="0 0 7 8"><path d="M0.3 2.8 H1.8 L4 0.6 V7.4 L1.8 5.2 H0.3 Z" fill="#b8b8b8"/><path d="M5.3 2.5 C6 3.3 6 4.7 5.3 5.5" stroke="#999" stroke-width="0.6" fill="none"/></svg>
<svg class="a" style="left:605px;top:428.5px" width="8" height="9" viewBox="0 0 8 9"><path d="M1 8 L4 5 M4.5 4.5 L7 1.5" stroke="#c8c8c8" stroke-width="1.3"/><circle cx="3.8" cy="5.3" r="1.2" fill="#c8c8c8"/></svg>
<div class="a t" style="left:618px;top:428px;font-size:8px;color:#e8e8e8">英</div>
<svg class="a" style="left:632px;top:428px" width="8" height="9" viewBox="0 0 8 9"><rect x="0.5" y="0.5" width="7.5" height="8" fill="#d8d8d8"/><path d="M2 2.5 H6.5 M2 4.5 H6.5 M2 6.5 H6.5" stroke="#555" stroke-width="0.7"/></svg>
<div class="a t" style="left:653px;top:424.8px;font-size:6.4px;color:#e8e8e8;width:20px;text-align:center">20:13</div>
<div class="a t" style="left:647.6px;top:434px;font-size:6.55px;color:#e8e8e8">2024/4/16</div>
<svg class="a" style="left:685.5px;top:427.5px" width="12" height="11" viewBox="0 0 12 11"><path d="M0.5 0.5 H9.5 V7 H4 L1.8 9 V7 H0.5 Z" fill="#f2f2f2"/><circle cx="8" cy="7.7" r="2.9" fill="#2b231f" stroke="#f2f2f2" stroke-width="0.7"/><text x="8" y="9.3" font-family="Liberation Sans" font-size="4.2" text-anchor="middle" fill="#f2f2f2">1</text></svg>
<div class="a" style="left:703px;top:423px;width:1px;height:19px;background:#8a8480"></div>
</body></html>
